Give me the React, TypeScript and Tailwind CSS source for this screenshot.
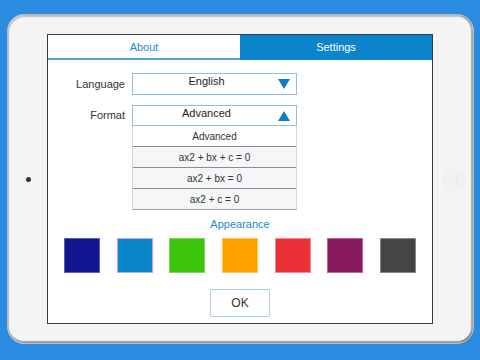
import React from "react";

const font = { fontFamily: '"Liberation Sans", Arial, sans-serif' };

function Tri({ up }: { up?: boolean }) {
  return (
    <svg width="12" height="10" viewBox="0 0 12 10" className="shrink-0">
      {up ? (
        <polygon points="6,0 12,10 0,10" fill="#0b7fc6" />
      ) : (
        <polygon points="0,0 12,0 6,10" fill="#0b7fc6" />
      )}
    </svg>
  );
}

const colors = ["#10168f", "#0a86cc", "#3cc40a", "#ffa200", "#ec3038", "#8a1a5e", "#444444"];
const borders = ["#5a5fb0", "#c9a0e6", "#7fd060", "#ffc060", "#f08a90", "#b06a94", "#8a8a8a"];

export default function App() {
  return (
    <div
      className="w-[480px] h-[360px] bg-[#2b8be0] pt-[14px] pl-[7px] overflow-hidden"
      style={font}
    >
      <div className="relative w-[467px] h-[330px] rounded-[17px] bg-[#f3f4f6] border border-[#b8bcc2] shadow-[inset_0_-2px_1px_rgba(0,0,0,0.35),inset_-2px_0_1px_rgba(0,0,0,0.3),inset_1px_2px_1px_rgba(0,0,0,0.2)] pt-[19px] pl-[39px]">
        {/* camera */}
        <div className="absolute left-[18px] top-[162px] w-[5px] h-[5px] rounded-full bg-[#2f3338]" />
        {/* home button */}
        <div className="absolute left-[435px] top-[154px] w-[22px] h-[22px] rounded-full border border-[#eceef1] bg-[#f0f1f3] flex items-center justify-center">
          <div className="w-[8px] h-[7px] rounded-[2px] border border-[#e8eaed]" />
        </div>

        {/* screen */}
        <div className="w-[386px] h-[290px] border border-[#3a3a3a] bg-white flex flex-col">
          {/* tabs */}
          <div className="flex h-[25px] shrink-0">
            <div className="flex-1 flex items-center justify-center text-[11px] text-[#1f8ad0] border-b-[2px] border-[#4aa3dc] pt-[1px]">
              About
            </div>
            <div className="flex-1 flex items-center justify-center text-[11px] text-white bg-[#0b84cc]">
              Settings
            </div>
          </div>

          {/* form */}
          <div className="flex flex-col mt-[13px]">
            <div className="flex items-center">
              <div className="w-[77px] text-right text-[11px] text-[#333]">Language</div>
              <div className="ml-[7px] w-[165px] h-[22px] border-[1.5px] border-[#8cc0e2] flex items-start pl-[2px] pr-[6px]">
                <div className="flex-1 text-center text-[11px] leading-[15px] text-[#222]">English</div>
                <div className="pt-[5px]"><Tri /></div>
              </div>
            </div>
            <div className="flex items-center mt-[10px]">
              <div className="w-[77px] text-right text-[11px] text-[#333]">Format</div>
              <div className="ml-[7px] w-[165px] h-[21px] border-[1.5px] border-[#8cc0e2] flex items-start pl-[2px] pr-[6px]">
                <div className="flex-1 text-center text-[11px] leading-[15px] text-[#222]">Advanced</div>
                <div className="pt-[5px]"><Tri up /></div>
              </div>
            </div>
            <div className="ml-[84px] w-[165px] flex flex-col border-x border-b border-[#d4d7da] border-b-[#9a9ea2]">
              <div className="h-[21px] flex items-center justify-center text-[10px] text-[#333] bg-white border-b border-[#8a8e92]">
                Advanced
              </div>
              <div className="h-[21px] flex items-center justify-center text-[10px] text-[#333] bg-[#f4f6f8] border-b border-[#8a8e92]">
                ax2 + bx + c = 0
              </div>
              <div className="h-[21px] flex items-center justify-center text-[10px] text-[#333] bg-[#f4f6f8] border-b border-[#8a8e92]">
                ax2 + bx = 0
              </div>
              <div className="h-[20px] flex items-center justify-center text-[10px] text-[#333] bg-[#f4f6f8]">
                ax2 + c = 0
              </div>
            </div>
          </div>

          <div className="mt-[6px] text-center text-[11px] text-[#1a8ad4]">Appearance</div>

          <div className="mt-[5px] px-[16px] flex justify-between">
            {colors.map((c, i) => (
              <div
                key={c}
                className="w-[36px] h-[35px] border"
                style={{ backgroundColor: c, borderColor: borders[i] }}
              />
            ))}
          </div>

          <div className="mt-[16px] flex justify-center">
            <div className="w-[60px] h-[28px] border border-[#a7d0ea] flex items-center justify-center text-[12px] text-[#333]">
              OK
            </div>
          </div>
        </div>
      </div>
    </div>
  );
}
